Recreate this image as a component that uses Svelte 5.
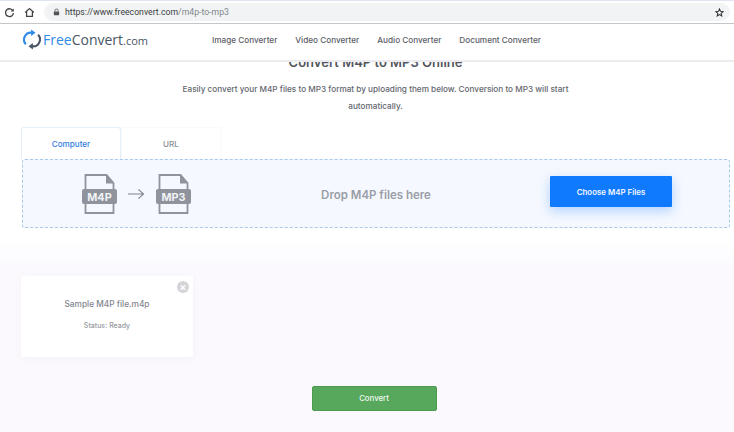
<script lang="ts">
    const navItems = ['Image Converter', 'Video Converter', 'Audio Converter', 'Document Converter'];
</script>

<div class="page">
    <div class="browser-bar">
        <svg class="bar-icon" viewBox="0 0 14 14" width="11" height="11">
            <path d="M11.600 5.200A5 5 0 1 0 12 7.600" fill="none" stroke="#444" stroke-width="1.700" />
            <path d="M12.400 1.800v4h-4z" fill="#444" />
        </svg>
        <svg class="bar-icon" viewBox="0 0 14 14" width="11" height="11">
            <path d="M1.500 7 7 2l5.500 5M3.300 6v6h7.400V6" fill="none" stroke="#444" stroke-width="1.600" />
        </svg>
        <div class="url-pill">
            <svg viewBox="0 0 10 10" width="7" height="8">
                <path d="M2.800 4.500V3a2.200 2.200 0 0 1 4.400 0v1.500" fill="none" stroke="#555" stroke-width="1.200" />
                <rect x="1.200" y="4.400" width="7.600" height="5.400" rx="0.800" fill="#555" />
            </svg>
            <span class="url">https://www.freeconvert.com<span class="url-path">/m4p-to-mp3</span></span>
            <svg viewBox="0 0 12 12" width="9" height="9">
                <path d="M6 1.300 7.400 4.500l3.400.3-2.600 2.300.8 3.400L6 8.700 3 10.500l.8-3.400L1.200 4.800l3.400-.3z" fill="none" stroke="#333" stroke-width="1.400" />
            </svg>
        </div>
    </div>

    <header class="site-header">
        <div class="logo">
            <svg viewBox="0 0 20 24" width="18" height="21">
                <path d="M3 17.500A8 8 0 0 1 10 4.200" fill="none" stroke="#2f8ae8" stroke-width="2.400" />
                <path d="M9 0.500l5 3.800-5 3.600z" fill="#2f8ae8" />
                <path d="M17 6.500A8 8 0 0 1 10 19.800" fill="none" stroke="#4a5663" stroke-width="2.400" />
                <path d="M11 23.500l-5-3.800 5-3.600z" fill="#4a5663" />
            </svg>
            <span class="logo-text"><span class="logo-free">Free</span>Convert<span class="logo-com">.com</span></span>
        </div>
        <nav class="nav">
            {#each navItems as item}
                <span>{item}</span>
            {/each}
        </nav>
    </header>

    <main class="upper">
        <h1>Convert M4P to MP3 Online</h1>
        <p class="lead">
            Easily convert your M4P files to MP3 format by uploading them below. Conversion to MP3 will start
            automatically.
        </p>

        <div class="tabs">
            <div class="tab active">Computer</div>
            <div class="tab">URL</div>
        </div>

        <div class="dropzone">
            <div class="formats">
                {@render fileIcon('M4P')}
                <svg viewBox="0 0 18 12" width="17" height="12">
                    <path d="M0 6h16M11 1l5.500 5-5.500 5" fill="none" stroke="#7d828c" stroke-width="1.100" />
                </svg>
                {@render fileIcon('MP3')}
            </div>
            <div class="drop-text">Drop M4P files here</div>
            <button class="choose-btn">Choose M4P Files</button>
        </div>
    </main>

    <section class="lower">
        <div class="file-card">
            <span class="remove">×</span>
            <div class="file-name">Sample M4P file.m4p</div>
            <div class="file-status">Status: Ready</div>
        </div>
        <div class="convert-row">
            <button class="convert-btn">Convert</button>
        </div>
    </section>
</div>

{#snippet fileIcon(label: string)}
    <svg viewBox="0 0 35 40" width="35" height="40">
        <path d="M3.500 15V1h21l7 8v6M3.500 30v9h28v-9" fill="none" stroke="#8f939c" stroke-width="1.800" />
        <path d="M24 1v8.500h8z" fill="#8f939c" />
        <rect x="0" y="15" width="35" height="15" rx="2" fill="#8f939c" />
        <text x="17.500" y="27" class="file-label">{label}</text>
    </svg>
{/snippet}

<style>
    :global(body) {
        margin: 0;
        overflow: hidden;
    }

    .page {
        width: 734px;
        height: 432px;
        overflow: hidden;
        font-family: Inter, 'Liberation Sans', sans-serif;
        background: #fff;
    }

    .browser-bar {
        height: 24px;
        box-sizing: border-box;
        padding: 0 4px;
        display: flex;
        align-items: center;
        gap: 9px;
        background: #fff;
        border-top: 1px solid #dfe4f2;
        border-bottom: 1px solid #c4c6c9;
    }

    .bar-icon {
        flex: none;
    }

    .url-pill {
        flex: 1;
        height: 18px;
        padding: 0 6px 0 9px;
        border-radius: 9px;
        background: #f1f3f4;
        display: flex;
        align-items: center;
        gap: 5px;
    }

    .url {
        font-family: Roboto, sans-serif;
        font-size: 8.700px;
        color: #3c4043;
        flex: 1;
    }

    .url-path {
        color: #80868b;
    }

    .site-header {
        position: relative;
        z-index: 2;
        height: 38px;
        box-sizing: border-box;
        background: #fff;
        border-bottom: 2px solid #ececf0;
        display: flex;
        align-items: center;
        padding: 0 0 5px 23px;
    }

    .logo {
        display: flex;
        align-items: center;
        gap: 2px;
        width: 189px;
    }

    .logo-text {
        font-family: 'Open Sans', sans-serif;
        font-size: 14px;
        color: #4a5663;
    }

    .logo-free {
        color: #2f8ae8;
    }

    .logo-com {
        font-size: 11px;
    }

    .nav {
        display: flex;
        gap: 18px;
        font-size: 8.200px;
        font-weight: 500;
        color: #5c6068;
    }

    .upper {
        height: 186px;
        margin-top: -8px;
        padding: 0 4px 0 21px;
        background: #fff;
    }

    h1 {
        margin: 0 0 11px;
        text-align: center;
        font-size: 13px;
        line-height: 16px;
        font-weight: 600;
        color: #53565e;
    }

    .lead {
        width: 440px;
        margin: 0 auto 12px;
        text-align: center;
        font-size: 8.200px;
        line-height: 17px;
        font-weight: 500;
        color: #64676f;
    }

    .tabs {
        display: flex;
    }

    .tab {
        width: 100px;
        height: 32px;
        box-sizing: border-box;
        display: flex;
        align-items: center;
        justify-content: center;
        font-size: 8.100px;
        font-weight: 500;
        color: #8a8d94;
        border: 1px solid #fafafd;
        border-bottom: none;
    }

    .tab.active {
        color: #2f7de1;
        background: #fff;
        border-color: #e6eef8;
        border-radius: 3px 3px 0 0;
    }

    .dropzone {
        height: 69px;
        box-sizing: border-box;
        margin-left: 1px;
        border: 1px dashed #a9c8f0;
        border-radius: 3px;
        background: #f5f8fe;
        display: flex;
        align-items: center;
        padding: 0 57px 0 59px;
    }

    .formats {
        display: flex;
        align-items: center;
        gap: 11px;
        width: 109px;
    }

    .file-label {
        font-family: Inter, sans-serif;
        font-size: 10.800px;
        font-weight: 700;
        fill: #f2f3f7;
        text-anchor: middle;
    }

    .drop-text {
        flex: 1;
        text-align: center;
        font-size: 11.500px;
        font-weight: 600;
        color: #9a9ea8;
        padding: 3px 0 0 11px;
    }

    .choose-btn {
        width: 122px;
        height: 31px;
        margin-bottom: 4px;
        border: none;
        border-radius: 1px;
        background: #107aff;
        color: #f3f7ff;
        font-family: inherit;
        font-size: 7.900px;
        font-weight: 600;
        box-shadow: 0 4px 12px rgba(15, 123, 255, 0.3);
    }

    .lower {
        height: 192px;
        box-sizing: border-box;
        padding: 36px 7px 0 21px;
        background: linear-gradient(#fff, #fbf9fd 28px);
    }

    .file-card {
        position: relative;
        width: 172px;
        height: 81px;
        box-sizing: border-box;
        padding-top: 23px;
        background: #fff;
        text-align: center;
        box-shadow: 0 2px 8px rgba(90, 80, 130, 0.04);
    }

    .remove {
        position: absolute;
        top: 5px;
        right: 4px;
        width: 12px;
        height: 12px;
        border-radius: 50%;
        background: #d4d4d9;
        color: #fff;
        font-size: 10px;
        line-height: 12px;
        font-weight: 700;
    }

    .file-name {
        font-size: 8.300px;
        font-weight: 500;
        color: #83868f;
        margin-bottom: 12px;
    }

    .file-status {
        font-size: 7px;
        font-weight: 500;
        color: #9699a2;
    }

    .convert-row {
        display: flex;
        justify-content: center;
        margin-top: 29px;
    }

    .convert-btn {
        width: 125px;
        height: 25px;
        padding-bottom: 2px;
        border: 1px solid #4b9b4f;
        border-radius: 2px;
        background: #57a85c;
        color: #f2f8f2;
        font-family: inherit;
        font-size: 7.800px;
        font-weight: 500;
    }
</style>
